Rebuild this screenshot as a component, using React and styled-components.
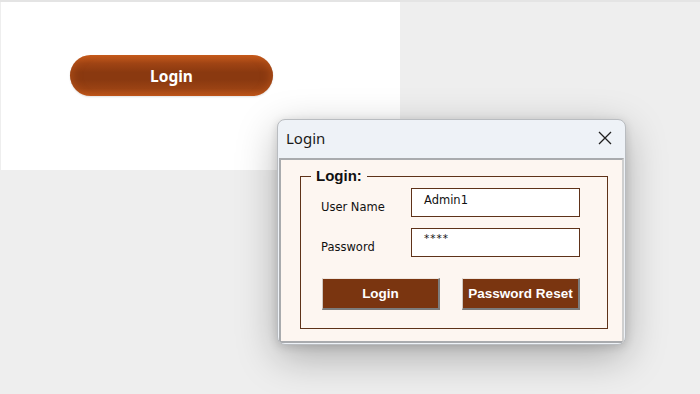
import React from "react";
import styled, { createGlobalStyle } from "styled-components";

const GlobalStyle = createGlobalStyle`
  html, body {
    margin: 0;
    padding: 0;
    background: #eeeeee;
  }
  * {
    box-sizing: border-box;
  }
`;

const Page = styled.div`
  position: relative;
  width: 700px;
  height: 394px;
  overflow: hidden;
  border-top: 2px solid #e4e4e4;
  padding-left: 1px;
  background: #eeeeee;
`;

const SheetPanel = styled.div`
  width: 399px;
  height: 168px;
  background: #ffffff;
  padding: 53px 0 0 69px;
`;

const PillButton = styled.button`
  width: 203px;
  height: 41px;
  border: none;
  border-radius: 21px;
  color: #ffffff;
  font-family: "Noto Sans", "Open Sans", sans-serif;
  font-weight: 700;
  font-size: 15.5px;
  background: linear-gradient(
    to bottom,
    #c85c1c 0%,
    #a04414 20%,
    #8a3910 42%,
    #8a3910 60%,
    #9a4213 82%,
    #bf571b 100%
  );
  box-shadow: inset 10px 0 10px -8px rgba(200, 92, 30, 0.55),
    inset -10px 0 10px -8px rgba(200, 92, 30, 0.55),
    0 1px 2px rgba(0, 0, 0, 0.12);
`;

const Dialog = styled.div`
  position: absolute;
  left: 277px;
  top: 117px;
  width: 349px;
  height: 226px;
  border-radius: 8px;
  border: 1px solid #b9bcc0;
  background: #eef2f7;
  box-shadow: 0 12px 40px rgba(0, 0, 0, 0.28), 0 2px 10px rgba(0, 0, 0, 0.14);
  display: flex;
  flex-direction: column;
  overflow: hidden;
`;

const TitleBar = styled.div`
  height: 38px;
  flex: none;
  display: flex;
  align-items: center;
  justify-content: space-between;
  padding: 0 13px 3px 8px;
  font-family: "Noto Sans", "Open Sans", sans-serif;
  font-size: 15px;
  color: #1a1a1a;
`;

const CloseIcon = styled.svg`
  width: 14px;
  height: 14px;
`;

const Body = styled.div`
  flex: 1;
  margin: 0 1px 1px;
  background: #fdf6f1;
  border-top: 2px solid #a9abae;
  border-left: 2px solid #a9abae;
  border-right: 2px solid #cfcfcf;
  border-bottom: 2px solid #a9abae;
  padding: 7px 14px 0 19px;
`;

const FrameSet = styled.fieldset`
  margin: 0;
  border: 1px solid #5e3219;
  padding: 3px 27px 18px 20px;
`;

const FrameLegend = styled.legend`
  margin-left: -10px;
  padding: 0 5px;
  font-family: "Liberation Sans", Arial, sans-serif;
  font-weight: 700;
  font-size: 15px;
  line-height: 18px;
  color: #111111;
`;

const FieldGrid = styled.div`
  display: grid;
  grid-template-columns: 90px 1fr;
  row-gap: 11px;
`;

const FieldLabel = styled.label`
  align-self: start;
  padding-top: 12px;
  line-height: 15px;
  font-family: "DejaVu Sans", sans-serif;
  font-size: 11.5px;
  color: #111111;
`;

const TextBox = styled.div`
  height: 29px;
  background: #ffffff;
  border: 1px solid #5e3219;
  padding: ${(p) => (p.$masked ? "2px" : "4px")} 0 0 12px;
  font-family: "DejaVu Sans", sans-serif;
  font-size: ${(p) => (p.$masked ? "10.5px" : "11.5px")};
  line-height: 15px;
  color: #111111;
  letter-spacing: ${(p) => (p.$masked ? "1px" : "0")};
`;

const ButtonRow = styled.div`
  display: flex;
  gap: 22px;
  margin: 21px 0 0 1px;
`;

const FormButton = styled.button`
  width: 118px;
  height: 32px;
  padding: 0;
  background: #7a3510;
  color: #ffffff;
  font-family: "Liberation Sans", Arial, sans-serif;
  font-weight: 700;
  font-size: 13.5px;
  border-top: 1px solid #efe6df;
  border-left: 1px solid #cfc7c0;
  border-right: 2px solid #7c7c7c;
  border-bottom: 2px solid #7c7c7c;
`;

const App = () => (
  <>
    <GlobalStyle />
    <Page>
      <SheetPanel>
        <PillButton>Login</PillButton>
      </SheetPanel>

      <Dialog>
        <TitleBar>
          <span>Login</span>
          <CloseIcon viewBox="0 0 14 14">
            <path
              d="M1 1 L13 13 M13 1 L1 13"
              stroke="#1f1f1f"
              strokeWidth="1.3"
              fill="none"
            />
          </CloseIcon>
        </TitleBar>
        <Body>
          <FrameSet>
            <FrameLegend>Login:</FrameLegend>
            <FieldGrid>
              <FieldLabel>User Name</FieldLabel>
              <TextBox>Admin1</TextBox>
              <FieldLabel>Password</FieldLabel>
              <TextBox $masked>****</TextBox>
            </FieldGrid>
            <ButtonRow>
              <FormButton>Login</FormButton>
              <FormButton>Password Reset</FormButton>
            </ButtonRow>
          </FrameSet>
        </Body>
      </Dialog>
    </Page>
  </>
);

export default App;
